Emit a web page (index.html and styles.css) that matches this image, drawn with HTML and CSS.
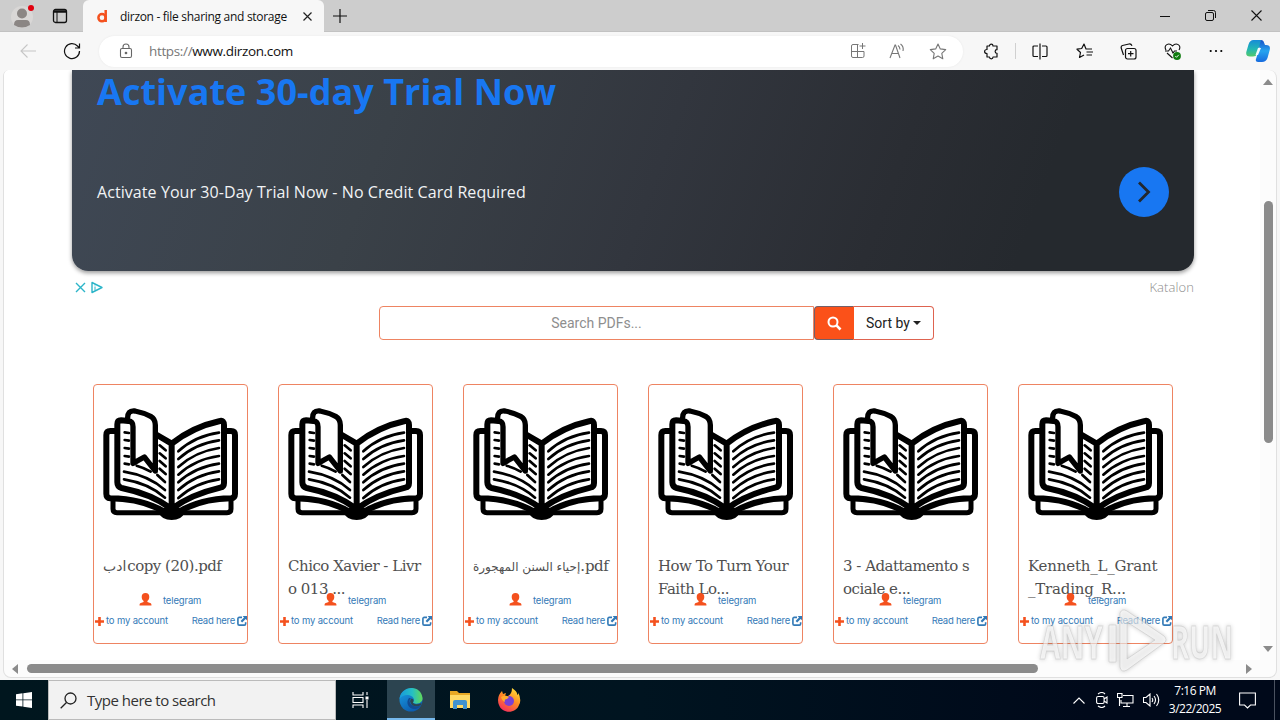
FILE: index.html
```html
<!DOCTYPE html>
<html lang="en">
<head>
    <meta charset="UTF-8">
    <meta name="viewport" content="width=device-width, initial-scale=1.0">
    <title>dirzon - file sharing and storage</title>
    <link rel="stylesheet" href="styles.css">
</head>
<body>
    <!-- Shared icons -->
    <svg class="defs" width="0" height="0">
        <symbol id="book" viewBox="54 99 405 336">
            <g fill="none" stroke="#000" stroke-linecap="round" stroke-linejoin="round">
                <path stroke-width="18" d="M90 168H76Q64 168 64 180V356Q64 369 76 370C138 371 195 385 240 411M426 168H438Q450 168 450 180V356Q450 369 438 370C380 371 325 385 280 411"/>
                <path stroke-width="15" d="M84 378V402Q84 413 96 413H426Q438 413 438 402V378"/>
                <path stroke-width="18" d="M138 139L108 136Q97 136 97 148V322Q97 336 110 339C165 350 218 370 260 402C302 370 355 350 406 338Q417 336 417 324V150Q417 135 405 138C350 150 300 174 260 206L216 180M260 206V408"/>
                <path fill="#fff" stroke-width="16" d="M128 133Q126 105 150 108Q175 113 197 124Q211 132 211 150V288L178 246L144 265V155Q144 139 130 137"/>
                <path stroke-width="8" d="M119 172L132 174M119 195L132 197M119 219L132 221M119 243L132 245M119 266L132 268M155 272Q177 278 197 290M217 300L240 321M224 211L242 226M224 235L242 250M224 258L242 274M224 281L242 297M117 290Q192 302 240 345M117 313Q192 325 240 368"/>
                <path stroke-width="8" d="M280 229Q330 183 402 173M280 252Q330 206 402 196M280 276Q330 230 402 219M280 299Q330 253 402 243M280 322Q330 276 402 266M280 345Q330 299 402 289M280 369Q330 323 402 313"/>
            </g>
            <ellipse cx="260" cy="414" rx="36" ry="21"/>
        </symbol>
        <symbol id="user" viewBox="0 0 13 13">
            <path d="M6.500 0C4 0 2.700 1.500 2.700 3.900C2.700 5.900 3.600 7 4.600 7.900V9L1.200 10.300Q.5 10.700.5 12.500H12.500Q12.500 10.700 11.800 10.300L8.400 9V7.900C9.400 7 10.300 5.900 10.300 3.900C10.300 1.500 9 0 6.500 0Z"/>
        </symbol>
        <symbol id="plus" viewBox="0 0 9 9">
            <path d="M3.200 0H5.800V3.200H9V5.800H5.800V9H3.200V5.800H0V3.200H3.200Z"/>
        </symbol>
        <symbol id="share" viewBox="0 0 11 11">
            <path fill="none" stroke="currentColor" stroke-width="1.800" d="M5.500 1.500H2.500Q1 1.500 1 3V8.500Q1 10 2.500 10H8Q9.500 10 9.500 8.500V7"/>
            <path d="M6.200 0H11V4.800L9.500 3.400L5.700 7.200L3.900 5.400L7.700 1.600Z"/>
        </symbol>
    </svg>

    <div class="tab-bar">
        <svg class="profile" width="24" height="26" viewBox="0 0 24 26"><circle cx="12" cy="14" r="11" fill="#d9d7d6"/><circle cx="12" cy="10.500" r="5" fill="#8b8684"/><path d="M4 22Q4 17 8 17H16Q20 17 20 22Q12 27 4 22Z" fill="#8b8684"/><circle cx="21" cy="5" r="3" fill="#e1000f"/></svg>
        <svg class="tab-menu" width="16" height="16" viewBox="0 0 16 16" fill="none" stroke="#111"><rect x="1.500" y="1.500" width="13" height="13" rx="2" stroke-width="1.300"/><path d="M2 3.500H14" stroke-width="2.500"/><path d="M5 4V14"/></svg>
        <div class="tab">
            <svg width="10" height="14" viewBox="0 0 10 14" fill="none" stroke="#f4511e" stroke-width="2.500"><circle cx="5" cy="8.700" r="3.600"/><path d="M8.700 1V13"/></svg>
            <span>dirzon - file sharing and storage</span>
            <svg class="tab-close" width="9" height="9" viewBox="0 0 9 9" stroke="#222" stroke-width="1.200"><path d="M.5.5L8.500 8.500M8.500.5L.5 8.500"/></svg>
        </div>
        <svg class="new-tab" width="14" height="14" viewBox="0 0 14 14" stroke="#111" stroke-width="1.200"><path d="M7 0V14M0 7H14"/></svg>
        <div class="window-buttons">
            <svg width="10" height="10" viewBox="0 0 10 10"><path d="M0 5.500H10" stroke="#111"/></svg>
            <svg width="11" height="11" viewBox="0 0 11 11" fill="none" stroke="#111"><rect x=".5" y="2.500" width="8" height="8" rx="1.500"/><path d="M3 .5H8.500Q10.500.5 10.500 2.500V8"/></svg>
            <svg width="11" height="11" viewBox="0 0 11 11" stroke="#111" stroke-width="1.100"><path d="M.5.5L10.500 10.500M10.500.5L.5 10.500"/></svg>
        </div>
    </div>

    <div class="toolbar">
        <div class="tool"><svg width="16" height="14" viewBox="0 0 16 14" fill="none" stroke="#c6c6c6" stroke-width="1.100"><path d="M16 7H1M7.500.5L1 7L7.500 13.500"/></svg></div>
        <div class="tool"><svg width="18" height="18" viewBox="0 0 18 18" fill="none" stroke="#111" stroke-width="1.200"><path d="M16.500 9A7.500 7.500 0 1 1 14.500 4L16 5.500M16.500 1.500V6H12"/></svg></div>
        <div class="address">
            <svg class="lock" width="14" height="16" viewBox="0 0 14 16" fill="none" stroke="#666" stroke-width="1.100"><rect x="1.500" y="5.500" width="11" height="9" rx="1.500"/><path d="M4 5.500V4A3 3 0 0 1 10 4V5.500"/><circle cx="7" cy="10" r=".8" fill="#555"/></svg>
            <span class="url"><i>https://</i>www.dirzon.com</span>
            <div class="address-icons">
                <svg width="16" height="16" viewBox="0 0 16 16" fill="none" stroke="#777"><path d="M8.500 1.500H3Q1.500 1.500 1.500 3V13Q1.500 14.500 3 14.500H12.500Q14 14.500 14 13V8.500H1.500M7.500 1.500V14.500M12.500 0V6M9.500 3H15.500"/></svg>
                <svg width="17" height="16" viewBox="0 0 17 16" fill="none" stroke="#777" stroke-width="1.100"><path d="M1 15L6 2H6.500L11 15M3 10.500H9.500M9 2.500Q11 4 11 6.500M11.500 1Q15 3.500 14 8"/></svg>
                <svg width="18" height="17" viewBox="0 0 18 17" fill="none" stroke="#777" stroke-width="1.100" stroke-linejoin="round"><path d="M9 1L11.300 5.900L16.700 6.600L12.800 10.400L13.800 15.800L9 13.100L4.200 15.800L5.200 10.400L1.300 6.600L6.700 5.900Z"/></svg>
            </div>
        </div>
        <div class="tool extensions"><svg width="16" height="17" viewBox="0 0 16 17" fill="none" stroke="#111" stroke-width="1.200" stroke-linejoin="round"><path d="M4 3H6.500C6.500 .5 10 .5 10 3H14V6.700C11.500 6.700 11.500 10.300 14 10.300V14H10C10 16.500 6.500 16.500 6.500 14H4V10.500C.8 10.500.8 6.500 4 6.500Z"/></svg></div>
        <div class="tool-sep"></div>
        <div class="tool"><svg width="16" height="17" viewBox="0 0 16 17" fill="none" stroke="#111" stroke-width="1.200"><path d="M6 3H2Q1 3 1 4V12.500Q1 13.500 2 13.500H6M10 3H14Q15 3 15 4V12.500Q15 13.500 14 13.500H10M8 .5V16.500"/></svg></div>
        <div class="tool"><svg width="17" height="16" viewBox="0 0 17 16" fill="none" stroke="#111" stroke-width="1.200" stroke-linejoin="round"><path d="M16 6H10L8 1L5.700 5.500L1 6.200L4.500 9.500L3.500 14.500L8 12M10.500 9H17M10.500 12H16"/></svg></div>
        <div class="tool"><svg width="17" height="17" viewBox="0 0 17 17" fill="none" stroke="#111" stroke-width="1.200"><rect x="5.500" y="5.500" width="10.500" height="10.500" rx="2"/><path d="M10.700 8V13.500M8 10.700H13.500M3.500 12L1.200 5Q.8 3 2.500 2.500L9 1Q11 .5 12 2.800"/></svg></div>
        <div class="tool"><svg width="17" height="17" viewBox="0 0 17 17" fill="none" stroke="#111" stroke-width="1.100"><path d="M2 7C-1 2 5-1 8.500 3C12-1 18 2 15 7M1 8H4.500L6.500 5L9 10L10.500 8H13M3 10L8.500 15"/><circle cx="13" cy="13" r="3.900" fill="#107c10" stroke="none"/><path d="M11.300 13L12.500 14.300L14.800 11.800" stroke="#fff" stroke-width=".9"/></svg></div>
        <div class="tool"><svg width="14" height="4" viewBox="0 0 14 4"><circle cx="1.700" cy="2" r="1.100"/><circle cx="7" cy="2" r="1.100"/><circle cx="12.300" cy="2" r="1.100"/></svg></div>
        <div class="copilot"><svg width="24" height="23" viewBox="0 0 24 23"><defs><linearGradient id="cp1" x2="0" y2="1"><stop stop-color="#168bd8"/><stop offset=".55" stop-color="#22b7b4"/><stop offset="1" stop-color="#53c96a"/></linearGradient><linearGradient id="cp2" x2="0" y2="1"><stop stop-color="#1550c7"/><stop offset=".5" stop-color="#25a4ef"/><stop offset="1" stop-color="#176bde"/></linearGradient></defs><path fill="url(#cp2)" d="M11 0H15Q17.500 0 18.200 3L19 5H20Q25 5 23.700 10L21.500 18Q20 22 16 22H12Q9 22 10 19L13.500 8Z"/><path fill="url(#cp1)" d="M7.500 0H15L11 14Q10 16.500 7 16.500H4Q-.5 16.500.3 12L2.500 4.500Q3.800 0 7.500 0Z"/><path fill="#f3fbff" d="M12 8H15L12 15H9.500Z"/></svg></div>
    </div>

    <div class="viewport">
        <div class="page">
            <div class="ad">
                <h2>Activate 30-day Trial Now</h2>
                <div class="ad-row">
                    <p>Activate Your 30-Day Trial Now - No Credit Card Required</p>
                    <div class="ad-button"><svg width="14" height="22" viewBox="0 0 14 22" fill="none" stroke="#22272d" stroke-width="2.800"><path d="M2 1.500L11.500 11L2 20.500"/></svg></div>
                </div>
            </div>
            <div class="ad-footer">
                <svg width="29" height="13" viewBox="0 0 29 13" fill="none" stroke="#2cb5c9" stroke-width="1.400"><path d="M1 2L10 11M10 2L1 11M17 1.500V11.500L27 6.500Z" stroke-linejoin="round"/><path d="M20 5.500V9.500M20 3.500V4.500" stroke-width="1"/></svg>
                <span>Katalon</span>
            </div>

            <div class="search">
                <div class="search-input">Search PDFs...</div>
                <div class="search-button"><svg width="15" height="15" viewBox="0 0 15 15" fill="none" stroke="#fff" stroke-width="2"><circle cx="6" cy="6" r="4.500"/><path d="M9.200 9.200L13.500 13.500" stroke-width="2.600"/></svg></div>
                <div class="sort">Sort by <span class="caret"></span></div>
            </div>

            <div class="cards">
                <div class="card">
                    <svg class="cover"><use href="#book"/></svg>
                    <div class="title"><span class="arabic">ادب</span><span class="copy">copy (20).pdf</span></div>
                    <div class="owner"><svg><use href="#user"/></svg><a>telegram</a></div>
                    <div class="links"><svg class="add"><use href="#plus"/></svg><a>to my account</a><a class="read">Read here</a><svg class="open"><use href="#share"/></svg></div>
                </div>
                <div class="card">
                    <svg class="cover"><use href="#book"/></svg>
                    <div class="title">Chico Xavier - Livr<br>o 013 ...</div>
                    <div class="owner"><svg><use href="#user"/></svg><a>telegram</a></div>
                    <div class="links"><svg class="add"><use href="#plus"/></svg><a>to my account</a><a class="read">Read here</a><svg class="open"><use href="#share"/></svg></div>
                </div>
                <div class="card">
                    <svg class="cover"><use href="#book"/></svg>
                    <div class="title"><span class="arabic long">إحياء السنن المهجورة</span>.pdf</div>
                    <div class="owner"><svg><use href="#user"/></svg><a>telegram</a></div>
                    <div class="links"><svg class="add"><use href="#plus"/></svg><a>to my account</a><a class="read">Read here</a><svg class="open"><use href="#share"/></svg></div>
                </div>
                <div class="card">
                    <svg class="cover"><use href="#book"/></svg>
                    <div class="title">How To Turn Your<br>Faith Lo...</div>
                    <div class="owner"><svg><use href="#user"/></svg><a>telegram</a></div>
                    <div class="links"><svg class="add"><use href="#plus"/></svg><a>to my account</a><a class="read">Read here</a><svg class="open"><use href="#share"/></svg></div>
                </div>
                <div class="card">
                    <svg class="cover"><use href="#book"/></svg>
                    <div class="title">3 - Adattamento s<br>ociale e...</div>
                    <div class="owner"><svg><use href="#user"/></svg><a>telegram</a></div>
                    <div class="links"><svg class="add"><use href="#plus"/></svg><a>to my account</a><a class="read">Read here</a><svg class="open"><use href="#share"/></svg></div>
                </div>
                <div class="card">
                    <svg class="cover"><use href="#book"/></svg>
                    <div class="title wide">Kenneth_L_Grant<br>_Trading_R...</div>
                    <div class="owner"><svg><use href="#user"/></svg><a>telegram</a></div>
                    <div class="links"><svg class="add"><use href="#plus"/></svg><a>to my account</a><a class="read">Read here</a><svg class="open"><use href="#share"/></svg></div>
                </div>
            </div>
        </div>

        <div class="scroll-y">
            <svg width="10" height="6" viewBox="0 0 10 6"><path d="M5 0L10 6H0Z"/></svg>
            <div class="thumb"></div>
            <svg width="10" height="6" viewBox="0 0 10 6"><path d="M0 0H10L5 6Z"/></svg>
        </div>
        <div class="scroll-x">
            <svg width="6" height="10" viewBox="0 0 6 10"><path d="M6 0V10L0 5Z"/></svg>
            <div class="thumb"></div>
            <svg width="6" height="10" viewBox="0 0 6 10"><path d="M0 0V10L6 5Z"/></svg>
        </div>
    </div>

    <svg class="watermark" width="200" height="72" viewBox="0 0 200 72">
        <g fill="#fff" fill-opacity=".6" stroke="#bbb" stroke-opacity=".45" stroke-width="1">
            <text x="3" y="54" textLength="63" lengthAdjust="spacingAndGlyphs">ANY</text>
            <text x="134" y="54" textLength="62" lengthAdjust="spacingAndGlyphs">RUN</text>
            <path fill-rule="evenodd" d="M72 20H79V57H72ZM83 8Q85 3 90 6L127 31Q131 35 127 38L90 65Q84 68 83 62ZM90 17V54L118 35Z"/>
        </g>
    </svg>

    <div class="taskbar">
        <div class="start"><svg width="16" height="16" viewBox="0 0 16 16" fill="#fff"><path d="M0 2.200L6.500 1.300V7.500H0ZM7.300 1.200L16 0V7.500H7.300ZM0 8.300H6.500V14.600L0 13.700ZM7.300 8.300H16V16L7.300 14.700Z"/></svg></div>
        <div class="task-search">
            <svg width="17" height="17" viewBox="0 0 17 17" fill="none" stroke="#222" stroke-width="1.300"><circle cx="10.500" cy="6.500" r="5.500"/><path d="M6.500 10.500L.7 16.300"/></svg>
            <span>Type here to search</span>
        </div>
        <div class="task"><svg width="17" height="16" viewBox="0 0 17 16" fill="none" stroke="#fff" stroke-width="1.100"><path d="M1 0V3H11V0M1 16V13H11V16M1 5.500H11V10.500H1ZM15 0V3M15 8V16"/><path d="M13.500 4.500H16.500V7.500H13.500Z" fill="#fff" stroke="none"/></svg></div>
        <div class="task active"><svg width="24" height="24" viewBox="0 0 24 24"><defs><linearGradient id="e1"><stop stop-color="#1799dc"/><stop offset=".55" stop-color="#25bfc5"/><stop offset="1" stop-color="#62d957"/></linearGradient><linearGradient id="e2" x2=".6" y2="1"><stop stop-color="#1aa0e5"/><stop offset="1" stop-color="#0c5bae"/></linearGradient></defs><circle cx="12" cy="12" r="11.500" fill="url(#e2)"/><path fill="url(#e1)" d="M.5 11C2-3 22-4 23.500 10C24 15 18 17 14.500 15C13 14 15 13.500 15 11.500C14 6 4 5 .5 11Z"/><path fill="#124a91" d="M10 10C6 15 10 22 17 21Q20 20 22 17Q17 20 13 17C9 14 11 11 12 10Z"/><path fill="#2c4450" d="M12.500 10.500Q15 11 14.500 13.500Q13 15 16 16Q19 17 22.500 15L22 17Q17 19.500 13 17Q9.500 13 12.500 10.500Z"/></svg></div>
        <div class="task"><svg width="22" height="20" viewBox="0 0 22 20"><path fill="#e8a824" d="M1 1H8L10 3H21V8H1Z"/><path fill="#ffd965" d="M1 5H21V18H1Z"/><path fill="#3f91cf" d="M4 19V12Q4 10 6 10H16Q18 10 18 12V19H14V15H8V19Z"/></svg></div>
        <div class="task"><svg width="24" height="24" viewBox="0 0 24 24"><defs><linearGradient id="f1" x1=".8" x2=".2" y2="1"><stop stop-color="#ffe43b"/><stop offset=".45" stop-color="#ff8c22"/><stop offset="1" stop-color="#f32761"/></linearGradient></defs><path fill="url(#f1)" d="M15 0Q21 4 20 7Q22 6 21 4Q25 12 22 17C19 26 5 26 2 17Q-1 9 5 3L6 6L9 5L8 8H11Q15 6 15 0Z"/><circle cx="12" cy="13" r="5" fill="#7941d5"/><path fill="#ffac2b" d="M4 9Q8 6 12 9L10 11Q7 11 8 14Q5 13 4 9Z"/></svg></div>
        <div class="tray">
            <svg width="12" height="7" viewBox="0 0 12 7"><path d="M.5 6.500L6 1L11.500 6.500"/></svg>
            <svg width="12" height="16" viewBox="0 0 12 16"><rect x=".6" y="4.500" width="7.500" height="7" rx="1.500"/><path d="M8 7L11 5V11L8 9M2 2Q6-1 9 2M2 14Q6 17 9 14"/></svg>
            <svg width="17" height="14" viewBox="0 0 17 14"><path d="M6 2.500H16V10H4V7M10 10V13M6 13.500H13M.5.5H5V4.500H.5ZM2.500 4.500V13"/></svg>
            <svg width="17" height="14" viewBox="0 0 17 14"><path d="M.5 4.500H3L7 1V13L3 9.500H.5ZM9 5Q10.500 7 9 9M11 3Q14 7 11 11M13.500 1Q18 7 13.500 13"/></svg>
        </div>
        <div class="clock"><div>7:16 PM</div><div>3/22/2025</div></div>
        <div class="notify"><svg width="17" height="17" viewBox="0 0 17 17" fill="none" stroke="#fff" stroke-width="1.100"><path d="M.6 1H16.400V13H11.500L8.500 16L5.500 13H.6Z"/></svg></div>
        <div class="desktop-edge"></div>
    </div>
</body>
</html>
```

FILE: styles.css
```css
:root {
    --accent: #f4511e;
    --card-border: #ee8462;
    --link: #337ab7;
    --thumb: #8b8b8b;
}

* {
    margin: 0;
    padding: 0;
    box-sizing: border-box;
}

body {
    width: 1280px;
    height: 720px;
    overflow: hidden;
    position: relative;
    background: #f7f7f7;
    font-family: 'Open Sans', 'Noto Sans', sans-serif;
}

svg {
    display: block;
    flex-shrink: 0;
}

.defs {
    position: absolute;
}

/* Browser chrome */
.tab-bar {
    height: 32px;
    display: flex;
    align-items: center;
    background: #cdcdcd;
    border-bottom: 1px solid #c2c2c2;
}

.profile {
    margin-left: 10px;
}

.tab-menu {
    margin-left: 18px;
}

.tab {
    width: 241px;
    height: 32px;
    margin-left: 15px;
    padding-left: 14px;
    display: flex;
    align-items: center;
    align-self: flex-start;
    background: #f7f7f7;
    border-radius: 6px 6px 0 0;
    font-size: 12px;
    color: #111;
}

.tab span {
    width: 169px;
    margin-left: 13px;
    letter-spacing: -0.3px;
    white-space: nowrap;
}

.tab-close {
    margin-left: 14px;
}

.new-tab {
    margin-left: 9px;
}

.window-buttons {
    margin-left: auto;
    margin-right: 18px;
    display: flex;
    align-items: center;
    gap: 35px;
}

.toolbar {
    height: 38px;
    padding-left: 6px;
    display: flex;
    align-items: center;
}

.tool {
    width: 44px;
    display: flex;
    justify-content: center;
}

.address {
    width: 864px;
    height: 31px;
    margin-left: 5px;
    padding: 0 16px 0 20px;
    display: flex;
    align-items: center;
    background: #fff;
    border-radius: 16px;
    box-shadow: 0 0 2px #e6e6e6;
}

.url {
    margin-left: 16px;
    font-size: 13.5px;
    letter-spacing: -0.35px;
    color: #111;
}

.url i {
    font-style: normal;
    color: #777;
}

.address-icons {
    margin-left: auto;
    display: flex;
    align-items: center;
    gap: 23px;
}

.extensions {
    margin-left: 6px;
}

.tool-sep {
    width: 1px;
    height: 16px;
    margin: 0 2px;
    background: #d0d0d0;
}

.copilot {
    margin-left: 8px;
}

/* Page area */
.viewport {
    width: 1274px;
    height: 608px;
    margin-left: 3px;
    display: grid;
    grid-template-columns: 1256px 16px;
    grid-template-rows: 590px 17px;
    overflow: hidden;
    background: #fcfcfc;
    border: 1px solid #e0e0e0;
    border-top: 0;
    border-radius: 6px 8px 8px 8px;
}

.page {
    padding-left: 68px;
    overflow: hidden;
    background: #fff;
}

.ad {
    width: 1122px;
    height: 201px;
    padding: 0 25px;
    background: linear-gradient(110deg, #3f4855 0%, #3a4148 28%, #32363e 52%, #2a2d33 72%, #25292e 85%);
    border-radius: 0 0 16px 16px;
    box-shadow: 0 2px 4px rgba(0, 0, 0, 0.4);
}

.ad h2 {
    height: 97px;
    font-size: 36px;
    line-height: 44px;
    font-weight: 700;
    letter-spacing: 0.04px;
    white-space: nowrap;
    color: #1877f2;
}

.ad-row {
    display: flex;
    align-items: center;
    justify-content: space-between;
}

.ad-row p {
    font-size: 16px;
    letter-spacing: 0.07px;
    white-space: nowrap;
    color: #f1f3f5;
}

.ad-button {
    width: 50px;
    height: 50px;
    display: flex;
    align-items: center;
    justify-content: center;
    border-radius: 50%;
    background: #1877f2;
}

.ad-footer {
    width: 1122px;
    height: 35px;
    padding: 0 0 3px 3px;
    display: flex;
    align-items: center;
    justify-content: space-between;
    font-size: 13px;
    color: #8c8c8c;
}

.ad-footer span {
    font-weight: 300;
    letter-spacing: 0.1px;
}

.search {
    margin-left: 307px;
    height: 34px;
    display: flex;
    font: 14px Roboto, sans-serif;
}

.search-input {
    width: 435px;
    line-height: 32px;
    text-align: center;
    color: #8e8e8e;
    border: 1px solid var(--card-border);
    border-radius: 4px 0 0 4px;
}

.search-button {
    width: 40px;
    display: flex;
    align-items: center;
    justify-content: center;
    background: #fb5119;
    border: 1px solid #735f68;
    border-right-color: #fb5119;
    border-radius: 4px 0 0 4px;
}

.sort {
    width: 80px;
    padding-left: 12px;
    display: flex;
    align-items: center;
    gap: 3px;
    color: #222;
    border: 1px solid #de6350;
    border-left: 0;
    border-radius: 0 4px 4px 0;
}

.caret {
    border: 4px solid transparent;
    border-top-color: #222;
    border-bottom: 0;
}

.cards {
    margin: 44px 0 0 21px;
    display: flex;
    gap: 30px;
}

.card {
    width: 155px;
    height: 260px;
    padding-top: 23px;
    border: 1px solid var(--card-border);
    border-radius: 4px;
}

.cover {
    width: 135px;
    height: 112px;
    margin-left: 9px;
}

.title {
    height: 37px;
    margin: 35px 0 0 9px;
    font: 15px/23px 'DejaVu Serif', serif;
    letter-spacing: -0.5px;
    white-space: nowrap;
    color: #505050;
}

.title.wide {
    letter-spacing: -0.2px;
}

.arabic {
    font-family: 'DejaVu Sans', sans-serif;
    font-size: 14px;
    letter-spacing: 0;
}

.arabic.long {
    font-size: 12px;
}

.copy {
    margin-left: 1px;
}

.owner {
    height: 16px;
    padding-left: 45px;
    display: flex;
    align-items: center;
}

.owner svg {
    width: 13px;
    height: 13px;
    margin-top: -1px;
    fill: var(--accent);
}

.owner a,
.links a {
    font: 9.5px/14px Inter, sans-serif;
    letter-spacing: -0.15px;
    white-space: nowrap;
    color: var(--link);
}

.owner a {
    margin: 1px 0 0 11px;
}

.links {
    margin-top: 6px;
    padding-left: 1px;
    display: flex;
    align-items: center;
}

.links .add {
    width: 9px;
    height: 9px;
    margin-right: 2px;
    fill: var(--accent);
}

.links .read {
    margin-left: auto;
    letter-spacing: -0.25px;
}

.links .open {
    width: 10px;
    height: 10px;
    margin-left: 2px;
    fill: var(--link);
    color: var(--link);
}

/* Scrollbars */
.scroll-y {
    display: flex;
    flex-direction: column;
    align-items: center;
    padding: 9px 0 8px;
    fill: var(--thumb);
}

.scroll-y .thumb {
    width: 9px;
    height: 242px;
    margin: 116px 0 auto;
    background: var(--thumb);
    border-radius: 5px;
}

.scroll-x {
    padding: 0 8px;
    display: flex;
    align-items: center;
    fill: var(--thumb);
}

.scroll-x .thumb {
    width: 1011px;
    height: 9px;
    margin: 0 auto 0 9px;
    background: var(--thumb);
    border-radius: 5px;
}

.watermark {
    position: absolute;
    left: 1037px;
    top: 605px;
    filter: drop-shadow(0 0 2px rgba(0, 0, 0, 0.3));
}

.watermark text {
    font: 700 47px 'Open Sans', sans-serif;
}

/* Taskbar */
.taskbar {
    height: 40px;
    margin-top: 2px;
    display: flex;
    align-items: stretch;
    background: linear-gradient(90deg, #00161e 0%, #001420 50%, #00091a 85%);
    color: #fff;
}

.start,
.task,
.notify {
    width: 48px;
    display: flex;
    align-items: center;
    justify-content: center;
}

.task-search {
    width: 288px;
    padding-left: 11px;
    display: flex;
    align-items: center;
    gap: 10px;
    background: #f2f2f2;
    border: 1px solid #bbb;
    color: #333;
    font-size: 15px;
    letter-spacing: -0.5px;
}

.task {
    width: 49px;
}

.task:nth-child(3) {
    width: 51px;
    padding-right: 3px;
}

.task.active {
    width: 48px;
    padding-top: 2px;
    background: #2c4450;
    border-bottom: 2px solid #76b9ed;
}

.tray {
    margin-left: auto;
    margin-right: 6px;
    display: flex;
    align-items: center;
    gap: 9px;
    fill: none;
    stroke: #fff;
    stroke-width: 1.1;
}

.tray svg:first-child {
    margin-right: 2px;
}

.clock {
    width: 58px;
    padding-top: 2px;
    text-align: center;
    font-size: 12px;
    line-height: 18px;
    letter-spacing: -0.5px;
    white-space: nowrap;
}

.notify {
    width: 46px;
}

.desktop-edge {
    width: 6px;
    margin-left: 4px;
    border-left: 1px solid #4a5260;
}
```
